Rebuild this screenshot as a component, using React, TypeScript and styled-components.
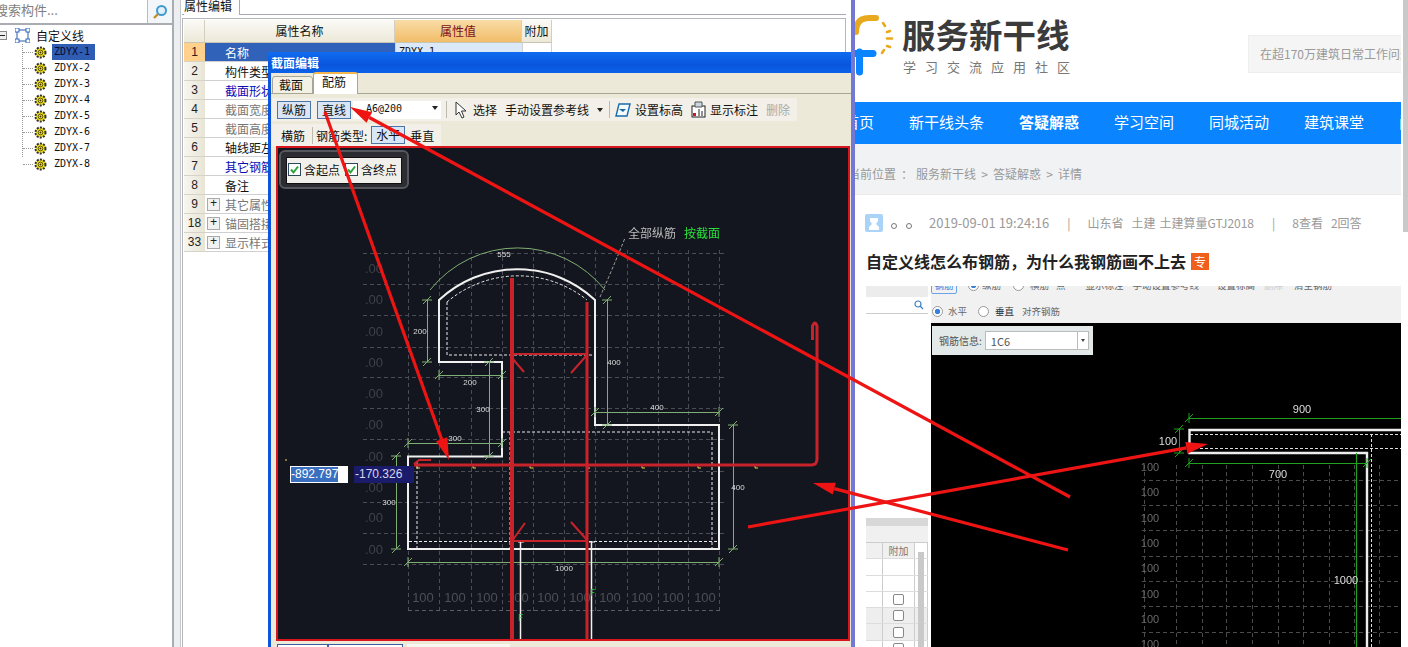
import React from "react";
import styled, { createGlobalStyle } from "styled-components";

const CJK = `"Noto Sans CJK SC", "Liberation Sans", sans-serif`;

const Global = createGlobalStyle`
  html, body { margin: 0; padding: 0; background: #fff; overflow: hidden; }
  * { box-sizing: border-box; }
  body { font-family: ${CJK}; font-size: 12px; color: #111; }
`;

const Desktop = styled.div`
  position: relative;
  display: flex;
  width: 1408px;
  height: 647px;
  overflow: hidden;
  background: #fff;
`;

/* ---------- tree pane ---------- */
const TreePane = styled.div`
  width: 172px;
  flex: none;
  display: flex;
  flex-direction: column;
  overflow: hidden;
`;
const SearchBar = styled.div`
  height: 25px;
  flex: none;
  display: flex;
  border-bottom: 2px solid #a9adb2;
`;
const SearchField = styled.div`
  flex: 1;
  margin-left: -5px;
  font-size: 13px;
  line-height: 20px;
  color: #7f7f7f;
  border-right: 1px solid #b8bcc0;
  white-space: nowrap;
`;
const SearchBtn = styled.div`
  width: 24px;
  display: flex;
  align-items: center;
  justify-content: center;
  background: #f3f6f9;
`;
const TreeRoot = styled.div`
  height: 18px;
  margin-top: 1px;
  display: flex;
  align-items: center;
  font-size: 12px;
`;
const Expander = styled.div`
  width: 9px;
  height: 9px;
  margin-left: -2px;
  border: 1px solid #888;
  background: #eee;
  display: flex;
  align-items: center;
  justify-content: center;
  &::after { content: ""; width: 5px; height: 1px; background: #222; }
`;
const RootLabel = styled.span`
  margin-left: 6px;
`;
const TreeChildren = styled.div`
  margin-left: 22px;
  width: 120px;
  height: 113px;
  border-left: 1px dotted #999;
`;
const TreeRow = styled.div`
  position: relative;
  height: 16px;
  padding-left: 11px;
  display: flex;
  align-items: center;
  &::before {
    content: "";
    position: absolute;
    left: 0;
    top: 8px;
    width: 10px;
    border-top: 1px dotted #999;
  }
`;
const TreeLabel = styled.span<{ $sel?: boolean }>`
  margin-left: 5px;
  padding: 0 5px 0 2px;
  height: 16px;
  font: 10px/16px "DejaVu Sans Mono", monospace;
  background: ${(p) => (p.$sel ? "#2f5db3" : "transparent")};
  color: ${(p) => (p.$sel ? "#0a0a30" : "#111")};
`;
const Splitter = styled.div`
  width: 9px;
  flex: none;
  background: #eceef0;
  border-left: 2px solid #a9adb2;
  border-right: 1px solid #c4c8cc;
`;

/* ---------- property pane ---------- */
const PropertyPane = styled.div`
  width: 670px;
  flex: none;
  display: flex;
  flex-direction: column;
  padding: 0 5px 0 1px;
`;
const PaneTabs = styled.div`
  height: 15px;
  flex: none;
  display: flex;
  padding-left: 2px;
  border-bottom: 1px solid #a8abb0;
`;
const PaneTab = styled.div`
  width: 56px;
  height: 15px;
  background: #fff;
  border-right: 1px solid #a8abb0;
  font-size: 12px;
  line-height: 11px;
  white-space: nowrap;
`;
const GridFrame = styled.div`
  flex: 1;
  margin-top: 3px;
  padding: 1px;
  border: 1px solid #b4b8bc;
  border-bottom: 0;
`;
const PropGrid = styled.div`
  display: grid;
  grid-template-columns: 21px 190px 127px 30px;
  grid-template-rows: 23px;
  grid-auto-rows: 19px;
  width: 368px;
`;
const HeadCell = styled.div<{ $on?: boolean }>`
  line-height: 21px;
  text-align: center;
  background: ${(p) => (p.$on ? "linear-gradient(#f9dca6,#f1bd69)" : "linear-gradient(#fbfaf6,#ece9d8)")};
  color: ${(p) => (p.$on ? "#7a1020" : "#111")};
  border-right: 1px solid #d2cfbf;
  border-bottom: 1px solid #c8c5b5;
`;
const NumCell = styled.div<{ $on?: boolean }>`
  text-align: center;
  font: 12px/18px "Liberation Sans", sans-serif;
  color: #222;
  background: ${(p) => (p.$on ? "#ffd18d" : "linear-gradient(90deg,#f7f6f0,#e8e5d6)")};
  border-bottom: 1px solid #d6d3c6;
`;
const NameCell = styled.div<{ $tone: string; $sel?: boolean }>`
  display: flex;
  align-items: center;
  padding-left: ${(p) => (p.$tone === "group" ? "2px" : "20px")};
  background: ${(p) => (p.$sel ? "#2f62b8" : "#fff")};
  color: ${(p) =>
    p.$sel ? "#fff" : p.$tone === "blue" ? "#0a0ab4" : p.$tone === "gray" || p.$tone === "group" ? "#777" : "#111"};
  border-bottom: 1px solid #d0d0d0;
  white-space: nowrap;
`;
const PlusBox = styled.span`
  width: 13px;
  height: 13px;
  margin-right: 5px;
  border: 1px solid #aaa;
  background: #f2f2f2;
  color: #222;
  font: 12px/11px "Liberation Mono", monospace;
  text-align: center;
`;
const ValueCell = styled.div<{ $on?: boolean }>`
  padding-left: 3px;
  font: 10px/18px "DejaVu Sans Mono", monospace;
  background: ${(p) => (p.$on ? "#dbe8f8" : "#fff")};
  border-bottom: 1px solid #d0d0d0;
  border-left: 1px solid #d0d0d0;
`;
const ExtraCell = styled.div`
  border-bottom: 1px solid #d0d0d0;
  border-left: 1px solid #d0d0d0;
  border-right: 1px solid #d0d0d0;
`;

/* ---------- section dialog ---------- */
const Dialog = styled.div`
  position: absolute;
  left: 268px;
  top: 52px;
  width: 583px;
  height: 595px;
  display: flex;
  flex-direction: column;
  background: #ece9d8;
  border-left: 3px solid #0d55dd;
`;
const TitleBar = styled.div`
  height: 21px;
  flex: none;
  margin-left: -3px;
  padding-left: 3px;
  background: linear-gradient(#0f6cf0, #0a55dc 60%, #0b62ea);
  color: #fff;
  font-weight: 700;
  font-size: 12px;
  line-height: 22px;
`;
const DialogTabs = styled.div`
  height: 21px;
  flex: none;
  display: flex;
  align-items: flex-end;
  padding-left: 1px;
  border-bottom: 1px solid #a7a594;
`;
const DialogTab = styled.div<{ $on?: boolean }>`
  width: ${(p) => (p.$on ? "45px" : "41px")};
  height: ${(p) => (p.$on ? "22px" : "18px")};
  margin-bottom: -1px;
  padding-right: 3px;
  text-align: center;
  font-size: 12px;
  line-height: ${(p) => (p.$on ? "15px" : "16px")};
  background: ${(p) => (p.$on ? "#fff" : "#f3f1e6")};
  border: 1px solid #a7a594;
  border-bottom: ${(p) => (p.$on ? "0" : "1px solid #a7a594")};
  border-top: ${(p) => (p.$on ? "2px solid #f1b64e" : "1px solid #a7a594")};
  border-radius: 3px 3px 0 0;
`;
const ToolRow = styled.div<{ $w: number; $top: number; $h: number }>`
  flex: none;
  display: flex;
  align-items: center;
  width: ${(p) => p.$w}px;
  height: ${(p) => p.$h}px;
  margin-top: ${(p) => p.$top}px;
  margin-left: 1px;
  padding-left: 5px;
  background: #f2f0e8;
  white-space: nowrap;
`;
const ToolBtn = styled.div<{ $ml?: number; $w: number }>`
  width: ${(p) => p.$w}px;
  height: 18px;
  margin-left: ${(p) => p.$ml ?? 0}px;
  line-height: 16px;
  text-align: center;
  background: #d9e6f5;
  border: 1px solid #4b74a8;
`;
const ToolText = styled.span<{ $ml?: number; $off?: boolean }>`
  margin-left: ${(p) => p.$ml ?? 0}px;
  color: ${(p) => (p.$off ? "#aaa" : "#111")};
`;
const ToolSep = styled.i<{ $ml: number }>`
  width: 1px;
  height: 17px;
  margin-left: ${(p) => p.$ml}px;
  background: #bdbbb0;
`;
const Combo = styled.div`
  width: 88px;
  height: 18px;
  margin-left: 2px;
  padding: 0 0 3px 13px;
  display: flex;
  align-items: center;
  justify-content: space-between;
  background: #fff;
  font: 10px "DejaVu Sans Mono", monospace;
`;
const Caret = styled.i<{ $ml?: number }>`
  width: 0;
  height: 0;
  margin-left: ${(p) => p.$ml ?? 0}px;
  margin-right: ${(p) => (p.$ml ? 0 : 3)}px;
  border: 3px solid transparent;
  border-top: 4px solid #222;
  border-bottom: 0;
`;
const CadFrame = styled.div`
  position: relative;
  width: 574px;
  height: 495px;
  flex: none;
  margin: 0 0 0 5px;
  border: 2px solid #d8141c;
  background: #14161f;
`;
const CadSvg = styled.svg`
  display: block;
  will-change: transform;
`;
const FloatBox = styled.div`
  position: absolute;
  left: 1px;
  top: 2px;
  width: 130px;
  height: 39px;
  padding: 5px;
  border: 2px solid #55575c;
  border-radius: 6px;
  background: #2b2d33;
`;
const FloatInner = styled.div`
  height: 27px;
  display: flex;
  align-items: center;
  padding: 0 0 2px 1px;
  background: #f0efe9;
  border: 1px solid #111;
`;
const CheckLabel = styled.span<{ $ml?: number }>`
  display: flex;
  align-items: center;
  margin-left: ${(p) => p.$ml ?? 0}px;
  gap: 3px;
  font-size: 12px;
  white-space: nowrap;
`;
const CoordX = styled.div`
  position: absolute;
  left: 12px;
  top: 318px;
  width: 58px;
  height: 17px;
  padding: 1px;
  background: #fff;
  font: 12px/15px "Liberation Sans", sans-serif;
  color: #fff;
  & > span { background: #3a6fc0; display: inline-block; }
`;
const CoordY = styled.div`
  position: absolute;
  left: 76px;
  top: 318px;
  width: 60px;
  height: 17px;
  padding-left: 1px;
  background: #1b1b6b;
  color: #d6d6ee;
  font: 12px/17px "Liberation Sans", sans-serif;
`;
const DialogFoot = styled.div`
  flex: 1;
  display: flex;
  padding: 3px 0 0 6px;
`;
const FootTab = styled.div<{ $w: number }>`
  width: ${(p) => p.$w}px;
  border: 1px solid #3a5fa0;
  border-bottom: 0;
  background: #fff;
`;
const FootBlank = styled.div`
  width: 103px;
  margin-left: 4px;
  background: #f8f7f1;
`;

/* ---------- web page ---------- */
const WebPage = styled.div`
  flex: 1;
  min-width: 0;
  display: flex;
  border-left: 4px solid #7278d4;
`;
const WebMain = styled.div`
  width: 546px;
  flex: none;
  display: flex;
  flex-direction: column;
  overflow: hidden;
`;
const WebGutter = styled.div`
  flex: 1;
  display: flex;
  flex-direction: column;
  align-items: flex-end;
  background: #fff;
`;
const ScrollThumb = styled.div`
  width: 5px;
  height: 232px;
  background: #c9c9c9;
`;
const Header = styled.div`
  height: 102px;
  flex: none;
  display: flex;
`;
const Brand = styled.div`
  display: flex;
  flex-direction: column;
`;
const BrandName = styled.div`
  margin-top: 10px;
  font-size: 33.5px;
  line-height: 48px;
  font-weight: 700;
  color: #3b3b3b;
  white-space: nowrap;
`;
const BrandSub = styled.div`
  margin: 2px 0 0 1px;
  font-size: 13px;
  line-height: 14px;
  letter-spacing: 9px;
  color: #777;
  white-space: nowrap;
`;
const SearchBox = styled.div`
  margin: 35px 0 0 auto;
  width: 153px;
  height: 38px;
  padding-left: 11px;
  background: #f5f5f5;
  border: 1px solid #eee;
  border-right: 0;
  font-size: 12px;
  line-height: 36px;
  color: #999;
  white-space: nowrap;
  overflow: hidden;
`;
const Nav = styled.div`
  height: 42px;
  flex: none;
  display: flex;
  gap: 35px;
  background: #0a84ff;
  overflow: hidden;
`;
const NavItem = styled.div<{ $bold?: boolean; $first?: boolean }>`
  flex: none;
  margin-left: ${(p) => (p.$first ? "-11px" : "0")};
  color: #fff;
  font-size: 15px;
  line-height: 39px;
  font-weight: ${(p) => (p.$bold ? 700 : 400)};
`;
const Crumbs = styled.div`
  height: 51px;
  flex: none;
  display: flex;
  align-items: center;
  gap: 5px;
  margin-left: -7px;
  padding-top: 8px;
  background: #f1f2f4;
  border-bottom: 1px solid #eaeaea;
  color: #999;
  font-size: 12px;
  white-space: nowrap;
`;
const CrumbSep = styled.span<{ $w?: number }>`
  width: ${(p) => p.$w ?? 7}px;
  text-align: center;
`;
const MetaRow = styled.div`
  height: 55px;
  flex: none;
  display: flex;
  align-items: center;
  padding-left: 10px;
  color: #9a9a9a;
  font-size: 12px;
  white-space: nowrap;
`;
const MetaItem = styled.span<{ $ml: number; $size?: number }>`
  margin-left: ${(p) => p.$ml}px;
  font-size: ${(p) => p.$size ?? 12}px;
`;
const MetaDots = styled.span`
  width: 38px;
  margin-left: 8px;
  padding-top: 6px;
  display: flex;
  gap: 9px;
  &::before, &::after {
    content: "";
    width: 4px;
    height: 4px;
    border: 1px solid #777;
    border-radius: 50%;
  }
`;
const TitleRow = styled.div`
  height: 36px;
  flex: none;
  display: flex;
  align-items: center;
  padding: 1px 0 15px 11px;
  font-size: 16px;
  font-weight: 700;
  color: #222;
  white-space: nowrap;
`;
const HotBadge = styled.span`
  width: 18px;
  height: 17px;
  margin-left: 5px;
  background: #f0601c;
  color: #fff;
  font-size: 12px;
  font-weight: 400;
  line-height: 17px;
  text-align: center;
`;
const Embed = styled.div`
  flex: 1;
  min-height: 0;
  display: flex;
  padding-left: 11px;
  overflow: hidden;
`;
const EmbedSide = styled.div`
  width: 62px;
  flex: none;
  display: flex;
  flex-direction: column;
`;
const SideTop = styled.div`
  height: 11px;
  flex: none;
  background: #ececec;
`;
const SideSearch = styled.div`
  height: 17px;
  flex: none;
  display: flex;
  justify-content: flex-end;
  align-items: center;
  padding-right: 4px;
  border-bottom: 1px solid #ccc;
`;
const SideGap = styled.div`
  height: 204px;
  flex: none;
`;
const SideBand = styled.div`
  height: 8px;
  flex: none;
  background: #d8d8d8;
`;
const SideHeadBlank = styled.div`
  height: 17px;
  flex: none;
  background: #f0f0f0;
  border-bottom: 1px solid #ccc;
`;
const SideTable = styled.div`
  position: relative;
  flex: 1;
  overflow: hidden;
`;
const SideRow = styled.div<{ $shade?: boolean }>`
  height: 16.3px;
  display: grid;
  grid-template-columns: 17px 32px 13px;
  border-bottom: 1px solid #ddd;
  background: ${(p) => (p.$shade ? "#eee" : "#fff")};
`;
const SideCell = styled.div<{ $head?: boolean }>`
  border-right: 1px solid #ccc;
  display: flex;
  align-items: center;
  justify-content: center;
  font-size: 10px;
  color: #777;
  background: ${(p) => (p.$head ? "#f0f0f0" : "transparent")};
`;
const SideBox = styled.i`
  width: 11px;
  height: 11px;
  border: 1px solid #888;
  border-radius: 2px;
  background: #fff;
`;
const SideScroll = styled.div`
  position: absolute;
  right: 4px;
  top: 9px;
  width: 6px;
  bottom: 0;
  background: #c9c9c9;
`;
const EmbedMain = styled.div`
  flex: 1;
  margin-left: 3px;
  min-width: 0;
  display: flex;
  flex-direction: column;
  overflow: hidden;
`;
const EmbedTop = styled.div`
  height: 20px;
  margin-top: -11px;
  flex: none;
  display: flex;
  align-items: center;
  background: #f1f1f1;
  color: #666;
  font-size: 9.5px;
  white-space: nowrap;
`;
const EmbedSub = styled.div`
  height: 28px;
  padding-top: 4px;
  flex: none;
  display: flex;
  align-items: center;
  background: #f1f1f1;
  color: #666;
  font-size: 9.5px;
  white-space: nowrap;
`;
const EmbedBtn = styled.span`
  width: 26px;
  height: 18px;
  border: 1px solid #6aa3e8;
  border-radius: 2px;
  color: #3a80e0;
  text-align: center;
  line-height: 16px;
`;
const Radio = styled.i<{ $on?: boolean; $ml: number }>`
  width: 11px;
  height: 11px;
  flex: none;
  margin-left: ${(p) => p.$ml}px;
  border-radius: 50%;
  border: 1px solid #999;
  background: ${(p) => (p.$on ? "radial-gradient(#3a80e0 0 2.5px,#fff 3px)" : "#fff")};
`;
const EmbedText = styled.span<{ $ml: number; $dim?: boolean; $strong?: boolean }>`
  margin-left: ${(p) => p.$ml}px;
  color: ${(p) => (p.$dim ? "#ccc" : p.$strong ? "#333" : "#666")};
`;
const EmbedCanvas = styled.div`
  position: relative;
  flex: 1;
  background: #000;
`;
const InfoBox = styled.div`
  position: absolute;
  left: 1px;
  top: 3px;
  width: 161px;
  height: 29px;
  display: flex;
  align-items: center;
  padding-left: 7px;
  background: #e3e8e8;
  color: #555;
  font-size: 10px;
  white-space: nowrap;
`;
const InfoSelect = styled.div`
  width: 104px;
  height: 19px;
  margin-left: 3px;
  padding-left: 5px;
  display: flex;
  align-items: center;
  justify-content: space-between;
  background: #fff;
  border: 1px solid #bbb;
  font-size: 11px;
`;
const InfoCaret = styled.span`
  width: 11px;
  height: 17px;
  border-left: 1px solid #bbb;
  display: flex;
  align-items: center;
  justify-content: center;
  &::after { content: ""; border: 2px solid transparent; border-top: 3px solid #444; border-bottom: 0; }
`;

/* ---------- overlay arrows ---------- */
const Overlay = styled.svg`
  position: absolute;
  left: 0;
  top: 0;
  pointer-events: none;
`;

/* ---------- svg text ---------- */
const DimText = styled.text<{ $size?: number }>`
  font: ${(p) => p.$size ?? 8}px "Liberation Sans", sans-serif;
  fill: #ddd;
  text-anchor: middle;
`;
const GhostText = styled.text<{ $size?: number; $fill?: string }>`
  font: ${(p) => p.$size ?? 13}px "Liberation Sans", sans-serif;
  fill: ${(p) => p.$fill ?? "#3f4149"};
  text-anchor: middle;
`;
const NoteText = styled.text<{ $fill: string; $size?: number }>`
  font: ${(p) => p.$size ?? 12}px ${CJK};
  fill: ${(p) => p.$fill};
`;

/* ---------- icons ---------- */
const RootIcon = () => (
  <svg width="15" height="15" viewBox="0 0 15 15" style={{ marginLeft: 8, flex: "none" }}>
    <rect x="2" y="2" width="11" height="11" fill="none" stroke="#2a5aa8" />
    {[0, 11].map((x) => [0, 11].map((y) => <rect key={`${x}${y}`} x={x} y={y} width="4" height="4" fill="#fff" stroke="#2a6ac0" />))}
  </svg>
);
const Gear = () => (
  <svg width="13" height="13" viewBox="0 0 13 13" style={{ flex: "none" }}>
    <circle cx="6.5" cy="6.5" r="5" fill="#f4e21c" stroke="#333" strokeWidth="2" strokeDasharray="2 1.2" />
    <circle cx="6.5" cy="6.5" r="2.4" fill="#f4e21c" stroke="#5a5200" />
    <circle cx="6.5" cy="6.5" r="0.9" fill="#333" />
  </svg>
);
const Magnifier = () => (
  <svg width="16" height="16" viewBox="0 0 16 16">
    <circle cx="9.5" cy="6.5" r="4.5" fill="#dff0fa" stroke="#3f9ad6" strokeWidth="2" />
    <path d="M6 10 L2 14" stroke="#c09028" strokeWidth="2.4" />
  </svg>
);
const CursorIcon = () => (
  <svg width="12" height="18" viewBox="0 0 12 18" style={{ marginLeft: 8, flex: "none" }}>
    <path d="M1 1 V14 L4 11 L7 17 L9 16 L6.5 10 H11 Z" fill="#fff" stroke="#333" />
  </svg>
);
const LevelIcon = () => (
  <svg width="16" height="16" viewBox="0 0 16 16" style={{ marginLeft: 5, flex: "none" }}>
    <path d="M4 2 H15 L12 14 H1 Z" fill="#f4fbff" stroke="#1a6aa8" strokeWidth="1.4" />
    <path d="M4 7 H11 L8 10 Z" fill="#1a6aa8" />
  </svg>
);
const NoteIcon = () => (
  <svg width="15" height="17" viewBox="0 0 15 17" style={{ marginLeft: 8, flex: "none" }}>
    <rect x="1" y="5" width="13" height="11" fill="#fff" stroke="#222" />
    <path d="M4 1 H11 V6 H4 Z" fill="#c9d6e4" stroke="#555" />
    <path d="M8 8 V15 M11 10 V15" stroke="#222" />
    <rect x="2" y="12" width="3" height="3" fill="#d01818" />
  </svg>
);
const Check = () => (
  <svg width="13" height="13" viewBox="0 0 13 13" style={{ flex: "none" }}>
    <rect x="0.5" y="0.5" width="12" height="12" fill="#fff" stroke="#2c4a5c" />
    <path d="M3 6.5 L5.5 9.5 L10 3.5" fill="none" stroke="#2aa53a" strokeWidth="2" />
  </svg>
);
const Logo = () => (
  <svg width="47" height="80" viewBox="855 0 47 80" style={{ flex: "none" }}>
    <path d="M856 32 Q856 18 869 18 H876" fill="none" stroke="#e9a91f" strokeWidth="6" strokeLinecap="round" />
    <path d="M855 53.5 H873" stroke="#0a84ff" strokeWidth="7" strokeLinecap="round" />
    <path d="M859.5 52 V72" stroke="#0a84ff" strokeWidth="7" strokeLinecap="round" />
    <g stroke="#e9a91f" strokeWidth="2.6" strokeLinecap="round">
      <path d="M883 23 L885 26" />
      <path d="M887 32 L890 31" />
      <path d="M887 38.5 H892" />
      <path d="M887 46 L890 47" />
      <path d="M882 53 L884 50" />
    </g>
  </svg>
);
const SmallLens = () => (
  <svg width="10" height="10" viewBox="0 0 10 10">
    <circle cx="4" cy="4" r="3" fill="none" stroke="#3a80c0" strokeWidth="1.2" />
    <path d="M6 6 L9 9" stroke="#3a80c0" strokeWidth="1.2" />
  </svg>
);
const Avatar = () => (
  <svg width="18" height="18" viewBox="0 0 18 18" style={{ flex: "none" }}>
    <rect width="18" height="18" rx="2" fill="#a9d3f7" />
    <path d="M5 4 H13 V7 L11 10 L14 13 V16 H4 V13 L7 10 L5 7 Z" fill="#fff" />
  </svg>
);

/* ---------- CAD drawing ---------- */
const Tick = ({ x, y, c }: { x: number; y: number; c: string }) => (
  <g stroke={c} strokeWidth="1">
    <path d={`M${x - 4} ${y + 4} L${x + 4} ${y - 4}`} />
  </g>
);
const DimH = ({ x1, x2, y, c = "#7fae72" }: { x1: number; x2: number; y: number; c?: string }) => (
  <g>
    <path d={`M${x1} ${y + 0.5} H${x2}`} stroke={c} />
    <Tick x={x1} y={y} c={c} />
    <Tick x={x2} y={y} c={c} />
    <path d={`M${x1} ${y - 5} V${y + 5} M${x2} ${y - 5} V${y + 5}`} stroke={c} />
  </g>
);
const DimV = ({ x, y1, y2, c = "#7fae72" }: { x: number; y1: number; y2: number; c?: string }) => (
  <g>
    <path d={`M${x + 0.5} ${y1} V${y2}`} stroke={c} />
    <Tick x={x} y={y1} c={c} />
    <Tick x={x} y={y2} c={c} />
    <path d={`M${x - 5} ${y1} H${x + 5} M${x - 5} ${y2} H${x + 5}`} stroke={c} />
  </g>
);

const gridX = [408, 439, 471, 502, 533, 564, 595, 627, 658, 688, 719];
const gridY = [253, 284, 315, 347, 377, 408, 439, 471, 502, 533, 564];
const leftLabels = [268, 299, 331, 362, 393, 424, 456, 487, 517, 549];
const bottomLabels = [423, 455, 487, 518, 548, 580, 610, 642, 673, 705];
const yellowTicks = [417, 473, 530, 587, 642, 698, 755];

const CadDrawing = () => (
  <CadSvg width="570" height="491" viewBox="278 148 570 491">
    <g stroke="#4a4d55" strokeDasharray="4 3" fill="none">
      {gridX.map((x) => <path key={x} d={`M${x + 0.5} 250 V612`} />)}
      {gridY.map((y) => <path key={y} d={`M363 ${y + 0.5} H725`} />)}
      <path d="M408 610.5 H721" stroke="#5a5d65" />
    </g>
    {leftLabels.map((y) => <GhostText key={y} x={374} y={y + 5}>.00</GhostText>)}
    {bottomLabels.map((x) => <GhostText key={x} x={x} y={602} $fill="#4d4f57">100</GhostText>)}

    <g fill="none" stroke="#e8e8e8" strokeWidth="1" strokeDasharray="3 2">
      <path d="M447 302 V355 H595" />
      <path d="M447 302 A110 110 0 0 1 587 300" />
      <path d="M502 432 H712 V549" />
      <path d="M417 461 V549" />
      <path d="M409 541.5 H719" />
      <path d="M510 432 V549" />
      <path d="M600 297 Q612 270 625 238" stroke="#aaa" />
    </g>
    <path
      d="M408 456.5 H502 V362 H439 V300 A114 114 0 0 1 595 300 V425 H719 V549 H408 Z"
      fill="none"
      stroke="#f0f0f0"
      strokeWidth="2"
    />

    <path d="M430 290 A112 112 0 0 1 605 290" fill="none" stroke="#7fae72" />
    <DimV x={427} y1={300} y2={362} />
    <DimH x1={439} x2={502} y={375} />
    <DimV x={489} y1={362} y2={456} />
    <DimH x1={408} x2={502} y={443} />
    <DimV x={607} y1={300} y2={425} />
    <DimH x1={595} x2={719} y={412} />
    <DimV x={733} y1={425} y2={549} />
    <DimH x1={408} x2={719} y={562} />
    <DimV x={396} y1={456} y2={549} />
    <DimText x={504} y={257}>555</DimText>
    <DimText x={420} y={334}>200</DimText>
    <DimText x={470} y={385}>200</DimText>
    <DimText x={483} y={412}>300</DimText>
    <DimText x={455} y={441}>300</DimText>
    <DimText x={614} y={365}>400</DimText>
    <DimText x={657} y={410}>400</DimText>
    <DimText x={738} y={490}>400</DimText>
    <DimText x={564} y={571}>1000</DimText>
    <DimText x={389} y={505}>300</DimText>
    <NoteText x={628} y={238} $fill="#bbb">全部纵筋</NoteText>
    <NoteText x={684} y={238} $fill="#2be03c">按截面</NoteText>

    <path d="M520.5 541 V640 M591.5 541 V640" stroke="#f0f0f0" strokeWidth="1.5" />
    <path d="M518 542 H524 M589 542 H595" stroke="#f0f0f0" />
    <NoteText x={518} y={621} $fill="#2be03c" $size={9}>F</NoteText>
    <NoteText x={590} y={596} $fill="#2be03c" $size={9}>F</NoteText>

    <g stroke="#f0d060" strokeWidth="1">
      {yellowTicks.map((x) => <path key={x} d={`M${x} 464 V468 M${x} 468 H${x + 3}`} />)}
      <path d="M285 460 H287" />
    </g>

    <g fill="none" stroke="#c8222b">
      <path d="M512 278 V640" strokeWidth="4" />
      <path d="M587 302 V640" strokeWidth="3" />
      <path d="M414 465 H811 Q817 465 817 459 V326 Q815 320 812.5 326 V340" strokeWidth="3" />
      <path d="M512 354 H588" strokeWidth="2" />
      <path d="M512 541 H587" strokeWidth="2" />
      <path d="M512 358 L524 372" strokeWidth="2" />
      <path d="M587 355 L571 373" strokeWidth="2" />
      <path d="M512 541 L525 523" strokeWidth="2" />
      <path d="M587 540 L571 522" strokeWidth="2" />
      <path d="M431 460 H419 L414 464" strokeWidth="2" />
    </g>
  </CadSvg>
);

const rGridX = [1144, 1176, 1202, 1226, 1252, 1278, 1303, 1329, 1354, 1379];
const rGridY = [480, 505, 530, 556, 581, 606, 632];
const rLabels = [467, 492, 518, 543, 568, 594, 619, 644];

const RightCad = () => (
  <CadSvg width="470" height="324" viewBox="931 323 470 324">
    <g stroke="#4b4b4b" strokeDasharray="4 3" fill="none">
      {rGridX.map((x) => <path key={x} d={`M${x + 0.5} 465 V647`} />)}
      {rGridY.map((y) => <path key={y} d={`M1142 ${y + 0.5} H1401`} />)}
    </g>
    {rLabels.map((y) => <GhostText key={y} x={1150} y={y + 4} $size={11} $fill="#6a6a6a">100</GhostText>)}
    <g fill="none" stroke="#ddd" strokeDasharray="3 2">
      <path d="M1190 434.5 H1401" />
      <path d="M1190 448.5 H1401" />
      <path d="M1371.5 434 V647" />
    </g>
    <path d="M1401 430 H1189.5 V453 H1367 V647" fill="none" stroke="#eee" strokeWidth="2.4" />
    <DimH x1={1189} x2={1420} y={418} c="#1fa01f" />
    <DimV x={1179} y1={429} y2={453} c="#1fa01f" />
    <DimH x1={1189} x2={1367} y={463} c="#1fa01f" />
    <path d="M1356.5 453 V647" stroke="#1fa01f" strokeWidth="1.2" />
    <DimText x={1302} y={413} $size={11}>900</DimText>
    <DimText x={1168} y={445} $size={11}>100</DimText>
    <DimText x={1278} y={478} $size={11}>700</DimText>
    <DimText x={1346} y={584} $size={11}>1000</DimText>
  </CadSvg>
);

/* ---------- arrows ---------- */
const arrows = [
  { from: [1070, 497], to: [350, 107] },
  { from: [325, 112], to: [449, 460] },
  { from: [1068, 550], to: [813, 483] },
  { from: [748, 527], to: [1208, 444] },
];
const Arrow = ({ from, to }: { from: number[]; to: number[] }) => {
  const dx = to[0] - from[0];
  const dy = to[1] - from[1];
  const len = Math.hypot(dx, dy);
  const ux = dx / len;
  const uy = dy / len;
  const bx = to[0] - ux * 22;
  const by = to[1] - uy * 22;
  const pts = [
    `${to[0]},${to[1]}`,
    `${bx - uy * 6},${by + ux * 6}`,
    `${bx + uy * 6},${by - ux * 6}`,
  ].join(" ");
  return (
    <g>
      <line x1={from[0]} y1={from[1]} x2={bx} y2={by} stroke="#ee1414" strokeWidth="3.2" />
      <polygon points={pts} fill="#ee1414" />
    </g>
  );
};

/* ---------- data ---------- */
const treeItems = ["ZDYX-1", "ZDYX-2", "ZDYX-3", "ZDYX-4", "ZDYX-5", "ZDYX-6", "ZDYX-7", "ZDYX-8"];
const props = [
  { n: "1", t: "名称", tone: "black" },
  { n: "2", t: "构件类型", tone: "black" },
  { n: "3", t: "截面形状", tone: "blue" },
  { n: "4", t: "截面宽度", tone: "gray" },
  { n: "5", t: "截面高度", tone: "gray" },
  { n: "6", t: "轴线距左", tone: "black" },
  { n: "7", t: "其它钢筋", tone: "blue" },
  { n: "8", t: "备注", tone: "black" },
  { n: "9", t: "其它属性", tone: "group" },
  { n: "18", t: "锚固搭接", tone: "group" },
  { n: "33", t: "显示样式", tone: "group" },
];
const navItems = ["首页", "新干线头条", "答疑解惑", "学习空间", "同城活动", "建筑课堂", "问答"];

export default function App() {
  return (
    <Desktop>
      <Global />
      <TreePane>
        <SearchBar>
          <SearchField>搜索构件...</SearchField>
          <SearchBtn><Magnifier /></SearchBtn>
        </SearchBar>
        <TreeRoot>
          <Expander />
          <RootIcon />
          <RootLabel>自定义线</RootLabel>
        </TreeRoot>
        <TreeChildren>
          {treeItems.map((t, i) => (
            <TreeRow key={t}>
              <Gear />
              <TreeLabel $sel={i === 0}>{t}</TreeLabel>
            </TreeRow>
          ))}
        </TreeChildren>
      </TreePane>
      <Splitter />
      <PropertyPane>
        <PaneTabs><PaneTab>属性编辑</PaneTab></PaneTabs>
        <GridFrame>
          <PropGrid>
            <HeadCell />
            <HeadCell>属性名称</HeadCell>
            <HeadCell $on>属性值</HeadCell>
            <HeadCell>附加</HeadCell>
            {props.map((p, i) => (
              <React.Fragment key={p.n}>
                <NumCell $on={i === 0}>{p.n}</NumCell>
                <NameCell $tone={p.tone} $sel={i === 0}>
                  {p.tone === "group" && <PlusBox>+</PlusBox>}
                  {p.t}
                </NameCell>
                <ValueCell $on={i === 0}>{i === 0 ? "ZDYX-1" : ""}</ValueCell>
                <ExtraCell />
              </React.Fragment>
            ))}
          </PropGrid>
        </GridFrame>
      </PropertyPane>
      <WebPage>
        <WebMain>
          <Header>
            <Logo />
            <Brand>
              <BrandName>服务新干线</BrandName>
              <BrandSub>学习交流应用社区</BrandSub>
            </Brand>
            <SearchBox>在超170万建筑日常工作问题</SearchBox>
          </Header>
          <Nav>
            {navItems.map((n, i) => (
              <NavItem key={n} $first={i === 0} $bold={n === "答疑解惑"}>{n}</NavItem>
            ))}
          </Nav>
          <Crumbs>
            <span>当前位置</span>
            <CrumbSep $w={10}>：</CrumbSep>
            <span>服务新干线</span>
            <CrumbSep>&gt;</CrumbSep>
            <span>答疑解惑</span>
            <CrumbSep>&gt;</CrumbSep>
            <span>详情</span>
          </Crumbs>
          <MetaRow>
            <Avatar />
            <MetaDots />
            <MetaItem $ml={0} $size={13}>2019-09-01 19:24:16</MetaItem>
            <MetaItem $ml={18}>|</MetaItem>
            <MetaItem $ml={17}>山东省</MetaItem>
            <MetaItem $ml={8}>土建</MetaItem>
            <MetaItem $ml={4}>土建算量GTJ2018</MetaItem>
            <MetaItem $ml={18}>|</MetaItem>
            <MetaItem $ml={17}>8查看</MetaItem>
            <MetaItem $ml={8}>2回答</MetaItem>
          </MetaRow>
          <TitleRow>
            自定义线怎么布钢筋，为什么我钢筋画不上去
            <HotBadge>专</HotBadge>
          </TitleRow>
          <Embed>
            <EmbedSide>
              <SideTop />
              <SideSearch><SmallLens /></SideSearch>
              <SideGap />
              <SideBand />
              <SideHeadBlank />
              <SideTable>
                <SideRow>
                  <SideCell $head />
                  <SideCell $head>附加</SideCell>
                  <SideCell />
                </SideRow>
                <SideRow><SideCell /><SideCell /><SideCell /></SideRow>
                <SideRow><SideCell /><SideCell /><SideCell /></SideRow>
                <SideRow><SideCell /><SideCell><SideBox /></SideCell><SideCell /></SideRow>
                <SideRow $shade><SideCell /><SideCell><SideBox /></SideCell><SideCell /></SideRow>
                <SideRow $shade><SideCell /><SideCell><SideBox /></SideCell><SideCell /></SideRow>
                <SideRow><SideCell /><SideCell><SideBox /></SideCell><SideCell /></SideRow>
                <SideScroll />
              </SideTable>
            </EmbedSide>
            <EmbedMain>
              <EmbedTop>
                <EmbedBtn>钢筋</EmbedBtn>
                <Radio $on $ml={11} />
                <EmbedText $ml={3}>纵筋</EmbedText>
                <Radio $ml={12} />
                <EmbedText $ml={6}>横筋</EmbedText>
                <EmbedText $ml={7}>点</EmbedText>
                <EmbedText $ml={20}>显示标注</EmbedText>
                <EmbedText $ml={9}>手动设置参考线</EmbedText>
                <EmbedText $ml={18}>设置标高</EmbedText>
                <EmbedText $ml={9} $dim>删除</EmbedText>
                <EmbedText $ml={11}>清空钢筋</EmbedText>
              </EmbedTop>
              <EmbedSub>
                <Radio $on $ml={1} />
                <EmbedText $ml={5}>水平</EmbedText>
                <Radio $ml={11} />
                <EmbedText $ml={6} $strong>垂直</EmbedText>
                <EmbedText $ml={8}>对齐钢筋</EmbedText>
              </EmbedSub>
              <EmbedCanvas>
                <RightCad />
                <InfoBox>
                  钢筋信息:
                  <InfoSelect>1C6<InfoCaret /></InfoSelect>
                </InfoBox>
              </EmbedCanvas>
            </EmbedMain>
          </Embed>
        </WebMain>
        <WebGutter><ScrollThumb /></WebGutter>
      </WebPage>

      <Dialog>
        <TitleBar>截面编辑</TitleBar>
        <DialogTabs>
          <DialogTab>截面</DialogTab>
          <DialogTab $on>配筋</DialogTab>
        </DialogTabs>
        <ToolRow $w={525} $top={4} $h={23}>
          <ToolBtn $w={34}>纵筋</ToolBtn>
          <ToolBtn $ml={6} $w={34}>直线</ToolBtn>
          <Combo>
            A6@200
            <Caret />
          </Combo>
          <ToolSep $ml={5} />
          <CursorIcon />
          <ToolText $ml={6}>选择</ToolText>
          <ToolText $ml={8}>手动设置参考线</ToolText>
          <Caret $ml={8} />
          <ToolSep $ml={6} />
          <LevelIcon />
          <ToolText $ml={4}>设置标高</ToolText>
          <NoteIcon />
          <ToolText $ml={4}>显示标注</ToolText>
          <ToolText $ml={8} $off>删除</ToolText>
        </ToolRow>
        <ToolRow $w={169} $top={3} $h={22}>
          <ToolText $ml={4}>横筋</ToolText>
          <ToolSep $ml={7} />
          <ToolText $ml={3}>钢筋类型:</ToolText>
          <ToolBtn $ml={4} $w={34}>水平</ToolBtn>
          <ToolText $ml={5}>垂直</ToolText>
        </ToolRow>
        <CadFrame>
          <CadDrawing />
          <FloatBox>
            <FloatInner>
              <CheckLabel><Check />含起点</CheckLabel>
              <CheckLabel $ml={5}><Check />含终点</CheckLabel>
            </FloatInner>
          </FloatBox>
          <CoordX><span>-892.797</span></CoordX>
          <CoordY>-170.326</CoordY>
        </CadFrame>
        <DialogFoot>
          <FootTab $w={51} />
          <FootTab $w={75} />
          <FootBlank />
        </DialogFoot>
      </Dialog>

      <Overlay width="1408" height="647" viewBox="0 0 1408 647">
        {arrows.map((a, i) => <Arrow key={i} from={a.from} to={a.to} />)}
      </Overlay>
    </Desktop>
  );
}
